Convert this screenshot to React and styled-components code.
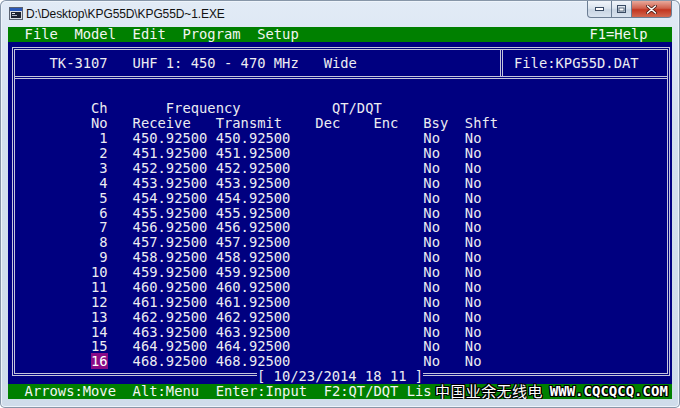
import React from 'react';
import styled, { createGlobalStyle } from 'styled-components';

const ROW = '14.89px';

const GlobalStyle = createGlobalStyle`
    html, body {
        margin: 0;
        padding: 0;
        background: #ffffff;
    }
    body {
        width: 680px;
        height: 408px;
        overflow: hidden;
    }
`;

/**
 * Window chrome
 */

const Window = styled.div`
    width: 680px;
    height: 408px;
    box-sizing: border-box;
    display: flex;
    flex-direction: column;
    background: linear-gradient(#e2ebf6, #d3e0ee 30%, #cfdcea);
    border-radius: 6px 6px 5px 5px;
    box-shadow: inset 0 0 0 1px #8796a8, inset 0 0 0 2px #eef4fb;
`;

const TitleBar = styled.div`
    height: 27px;
    flex: none;
    display: flex;
    align-items: center;
    padding-left: 9px;
    gap: 3px;
`;

const TitleText = styled.span`
    font-family: "Liberation Sans", Arial, sans-serif;
    font-size: 12px;
    color: #111;
    letter-spacing: -0.1px;
`;

const Controls = styled.div`
    margin-left: auto;
    margin-right: 8px;
    align-self: flex-start;
    margin-top: 1px;
    display: flex;
`;

const CtrlButton = styled.div`
    height: 17px;
    width: ${p => p.w}px;
    box-sizing: border-box;
    display: flex;
    align-items: center;
    justify-content: center;
    border: 1px solid #6b7d93;
    border-top: 0;
    border-left-width: ${p => (p.first ? 1 : 0)}px;
    border-radius: ${p => (p.first ? '0 0 0 4px' : p.close ? '0 0 4px 0' : '0')};
    background: ${p => p.close
        ? 'linear-gradient(#e9a99b, #d0614d 45%, #c2351f 55%, #d2684f)'
        : 'linear-gradient(#f1f5fa, #dbe4ee 45%, #c9d5e3 55%, #d9e3ef)'};
`;

const DosIcon = () => (
    <svg width="14" height="13" viewBox="0 0 14 13">
        <rect x="0.5" y="0.5" width="13" height="12" fill="#d8dde4" stroke="#5a6270" />
        <rect x="1" y="1" width="12" height="3" fill="#2a58b8" />
        <rect x="2" y="5" width="10" height="6" fill="#1d2230" />
        <rect x="3" y="6" width="3" height="1" fill="#e8e8e8" />
        <rect x="3" y="8" width="5" height="1" fill="#b0b8c8" />
    </svg>
);

/**
 * Console
 */

const ClientRow = styled.div`
    display: flex;
    padding: 0 8px;
    height: 372.2px;
    flex: none;
`;

const Console = styled.div`
    width: 664px;
    height: 100%;
    display: flex;
    flex-direction: column;
    background: #000080;
    font-family: "DejaVu Sans Mono", "Liberation Mono", monospace;
    font-size: 13.8px;
    color: #ececf2;
    white-space: pre;
    overflow: hidden;
`;

const Line = styled.div`
    height: ${ROW};
    line-height: ${ROW};
    flex: none;
    position: relative;
    background: ${p => (p.green ? '#008000' : 'transparent')};
    color: ${p => (p.green ? '#f2f6f2' : 'inherit')};
`;

const BlueArea = styled.div`
    flex: 1;
    display: flex;
    flex-direction: column;
    padding: 5.1px 2px 8px 4px;
    min-height: 0;
`;

const Box = styled.div`
    flex: 1;
    position: relative;
    display: flex;
    flex-direction: column;
    border: 3px double #c4c4dc;
`;

const HeaderRow = styled.div`
    height: 26px;
    flex: none;
    display: flex;
    align-items: center;
    border-bottom: 3px double #c4c4dc;
`;

const HeaderMain = styled.div`
    flex: 1;
    padding-left: 1.3px;
`;

const HeaderFile = styled.div`
    width: 167px;
    height: 100%;
    box-sizing: border-box;
    display: flex;
    align-items: center;
    padding-left: 11px;
    border-left: 3px double #c4c4dc;
`;

const TableBody = styled.div`
    flex: 1;
    padding: 22.5px 0 0 1.3px;
`;

const Highlight = styled.span`
    background: #8a0a86;
    color: #ffffff;
`;

const DateLabel = styled.div`
    position: absolute;
    top: 319.5px;
    left: 242px;
    height: ${ROW};
    line-height: ${ROW};
    background: #000080;
`;

const Watermark = styled.div`
    position: absolute;
    left: 427px;
    top: 0;
    height: 100%;
    display: flex;
    align-items: center;
    gap: 7px;
    color: #ffffff;
    background: #008000;
    text-shadow: 1px 0 0 #000, -1px 0 0 #000, 0 1px 0 #000, 0 -1px 0 #000,
        1px 1px 0 #000, -1px -1px 0 #000, 1px -1px 0 #000, -1px 1px 0 #000;
`;

const WmCjk = styled.span`
    font-family: "Noto Sans CJK SC", sans-serif;
    font-size: 15px;
    letter-spacing: 0.4px;
`;

const WmUrl = styled.span`
    font-family: "DejaVu Sans Mono", monospace;
    font-size: 14px;
    font-weight: bold;
`;

// builds a fixed-width text line: parts are [column, text]
const cols = (parts, start = 0) => {
    let s = '';
    parts.forEach(([c, t]) => {
        s = s.padEnd(c - start, ' ') + t;
    });
    return s;
};

const receive = [
    '450.92500', '451.92500', '452.92500', '453.92500', '454.92500', '455.92500',
    '456.92500', '457.92500', '458.92500', '459.92500', '460.92500', '461.92500',
    '462.92500', '463.92500', '464.92500', '468.92500'
];

const App = () => {
    return (
        <>
            <GlobalStyle />
            <Window>
                <TitleBar>
                    <DosIcon />
                    <TitleText>D:\Desktop\KPG55D\KPG55D~1.EXE</TitleText>
                    <Controls>
                        <CtrlButton w={25} first>
                            <svg width="9" height="4"><rect x="0.5" y="0.5" width="8" height="3" fill="#fff" stroke="#394b63" /></svg>
                        </CtrlButton>
                        <CtrlButton w={20}>
                            <svg width="9" height="8"><rect x="0.5" y="0.5" width="8" height="7" fill="none" stroke="#394b63" /><rect x="2" y="3" width="5" height="3" fill="#fff" stroke="#394b63" strokeWidth="0.8" /></svg>
                        </CtrlButton>
                        <CtrlButton w={40} close>
                            <svg width="11" height="9" viewBox="0 0 11 9"><path d="M1.5 1 L9.5 8 M9.5 1 L1.5 8" stroke="#4a1a14" strokeWidth="3" strokeLinecap="round" /><path d="M1.5 1 L9.5 8 M9.5 1 L1.5 8" stroke="#ffffff" strokeWidth="1.6" strokeLinecap="round" /></svg>
                        </CtrlButton>
                    </Controls>
                </TitleBar>
                <ClientRow>
                    <Console>
                        <Line green>
                            {cols([[2, 'File'], [8, 'Model'], [15, 'Edit'], [21, 'Program'], [30, 'Setup'], [70, 'F1=Help']])}
                        </Line>
                        <BlueArea>
                            <Box>
                                <HeaderRow>
                                    <HeaderMain>
                                        {cols([[5, 'TK-3107'], [15, 'UHF 1: 450 - 470 MHz'], [38, 'Wide']], 1)}
                                    </HeaderMain>
                                    <HeaderFile>File:KPG55D.DAT</HeaderFile>
                                </HeaderRow>
                                <TableBody>
                                    <Line>{cols([[10, 'Ch'], [19, 'Frequency'], [39, 'QT/DQT']], 1)}</Line>
                                    <Line>{cols([[10, 'No'], [15, 'Receive'], [25, 'Transmit'], [37, 'Dec'], [44, 'Enc'], [50, 'Bsy'], [55, 'Shft']], 1)}</Line>
                                    {receive.map((f, i) => {
                                        const num = String(i + 1).padStart(2, ' ');
                                        const last = i === receive.length - 1;
                                        return (
                                            <Line key={i}>
                                                {' '.repeat(9)}
                                                {last ? <Highlight>{num}</Highlight> : num}
                                                {cols([[15, f], [25, f], [50, 'No'], [55, 'No']], 12)}
                                            </Line>
                                        );
                                    })}
                                </TableBody>
                                <DateLabel>[ 10/23/2014 18 11 ]</DateLabel>
                            </Box>
                        </BlueArea>
                        <Line green>
                            {cols([[2, 'Arrows:Move'], [15, 'Alt:Menu'], [25, 'Enter:Input'], [38, 'F2:QT/DQT Lis']])}
                            <Watermark>
                                <WmCjk>中国业余无线电</WmCjk>
                                <WmUrl>WWW.CQCQCQ.COM</WmUrl>
                            </Watermark>
                        </Line>
                    </Console>
                </ClientRow>
            </Window>
        </>
    );
};

export default App;
